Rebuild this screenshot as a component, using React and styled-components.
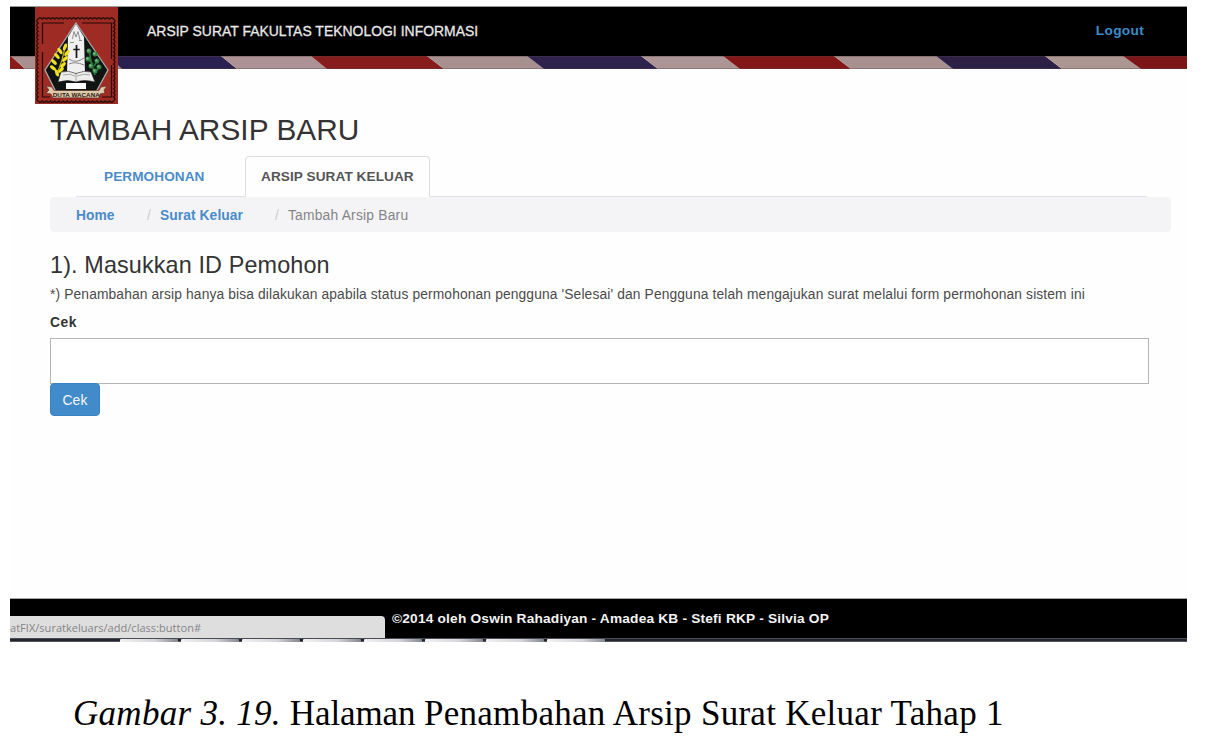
import React from "react";
import styled, { createGlobalStyle } from "styled-components";

const GlobalStyle = createGlobalStyle`
  * { box-sizing: border-box; }
  body { margin: 0; background: #fff; font-family: "Liberation Sans", Arial, sans-serif; color: #333; }
  a { text-decoration: none; }
  h1, h2, p { margin: 0; font-weight: 400; }
`;

const Sheet = styled.div`
  width: 1208px;
  height: 744px;
  padding: 6px 0 0 10px;
  overflow: hidden;
`;

const Screen = styled.div`
  width: 1177px;
  height: 636px;
  display: flex;
  flex-direction: column;
  background: #fefefe;
`;

const Header = styled.header`
  position: relative;
  height: 50px;
  flex: none;
  display: flex;
  justify-content: space-between;
  align-items: center;
  padding: 0 43px 1px 137px;
  background: #000;
  border-top: 1px solid #999;
`;

const Brand = styled.span`
  font-size: 13.9px;
  line-height: 16px;
  letter-spacing: 0.04px;
  color: #e8e8e8;
  -webkit-text-stroke: 0.3px #e8e8e8;
  white-space: nowrap;
`;

const LogoutLink = styled.a`
  font-size: 13.7px;
  font-weight: 700;
  line-height: 16px;
  letter-spacing: 0.3px;
  color: #3f8bcb;
`;

const LogoBadge = styled.svg`
  position: absolute;
  left: 25px;
  top: 0;
  width: 83px;
  height: 97px;
  z-index: 2;
`;

const Ribbon = styled.svg`
  display: block;
  flex: none;
  width: 1177px;
  height: 13px;
`;

const Main = styled.main`
  flex: 1;
  padding: 0 38px 0 40px;
`;

const Title = styled.h1`
  margin-top: 44px;
  font-size: 29.8px;
  line-height: 34px;
  letter-spacing: 0.05px;
  white-space: nowrap;
`;

const Tabs = styled.nav`
  display: flex;
  margin: 9px 2px 0 26px;
  height: 41px;
  border-bottom: 1px solid #e2e2e4;
`;

const Tab = styled.a`
  width: ${(p) => p.$width};
  height: 41px;
  padding-left: ${(p) => p.$inset};
  font-size: 13.6px;
  font-weight: 700;
  line-height: 42px;
  letter-spacing: 0.08px;
  white-space: nowrap;
  color: ${(p) => (p.$active ? "#555" : "#4a8bca")};
  ${(p) =>
    p.$active &&
    "line-height: 40px; background: #fefefe; border: 1px solid #dedee0; border-bottom-color: #fefefe; border-radius: 4px 4px 0 0;"}
`;

const Breadcrumb = styled.ol`
  display: flex;
  align-items: center;
  width: 1121px;
  height: 35px;
  margin: 0;
  padding: 1px 0 0 26px;
  list-style: none;
  background: #f4f4f6;
  border-radius: 4px;
  font-size: 13.8px;
`;

const Crumb = styled.li`
  display: flex;
  width: ${(p) => p.$width};
  white-space: nowrap;
  letter-spacing: ${(p) => p.$spacing};
  color: #848486;
  a { font-weight: 700; color: #4a8bca; }
`;

const Slash = styled.span`
  width: 13px;
  color: #ccc;
`;

const SectionTitle = styled.h2`
  margin-top: 19px;
  font-size: 23.4px;
  line-height: 28px;
  letter-spacing: 0.12px;
  white-space: nowrap;
`;

const Note = styled.p`
  margin-top: 7px;
  font-size: 13.8px;
  line-height: 18px;
  letter-spacing: 0.13px;
  color: #4a4a4a;
  white-space: nowrap;
`;

const Label = styled.label`
  display: block;
  margin-top: 10px;
  font-size: 13.8px;
  font-weight: 700;
  line-height: 18px;
  letter-spacing: 0.5px;
`;

const Field = styled.input`
  display: block;
  width: 1099px;
  height: 46px;
  margin: 6px 0 0;
  padding: 0 12px;
  background: #fff;
  border: 1px solid #b4b4b4;
  outline: none;
`;

const Button = styled.button`
  display: block;
  width: 50px;
  height: 33px;
  margin-top: -1px;
  padding: 0;
  position: relative;
  border: 1px solid #3b82c2;
  border-radius: 4px;
  background: #428bca;
  color: #f4f8fc;
  font: 13.9px "Liberation Sans", Arial, sans-serif;
  letter-spacing: 0.1px;
`;

const Footer = styled.footer`
  position: relative;
  flex: none;
  height: 40px;
  padding: 12px 0 0 382px;
  background: #000;
  border-top: 1px solid #aaa;
  color: #f4f4f4;
  font-size: 13.7px;
  font-weight: 700;
  line-height: 16px;
  letter-spacing: 0.2px;
  white-space: nowrap;
`;

const StatusBubble = styled.div`
  position: absolute;
  left: 0;
  bottom: 0;
  width: 375px;
  height: 22px;
  padding-top: 4px;
  background: #dededf;
  border-radius: 0 4px 0 0;
  color: #858585;
  font: 11px/16px "Open Sans", "Noto Sans", sans-serif;
  letter-spacing: 0.03px;
`;

const Taskbar = styled.div`
  display: flex;
  flex: none;
  gap: 3px;
  height: 4px;
  padding-left: 110px;
  background: #22252e;
  border-top: 1px solid #4a4c55;
  border-bottom: 1px solid #55555e;
`;

const TaskItem = styled.span`
  width: 58px;
  height: 3px;
  border-radius: 1px 1px 0 0;
  background: linear-gradient(90deg, #f2f2f4, #d4d5d9 60%, #85878f);
`;

const Caption = styled.p`
  margin: 52px 0 0 63px;
  font-family: "Liberation Serif", "Times New Roman", serif;
  font-size: 35px;
  line-height: 40px;
  letter-spacing: 0.28px;
  color: #000;
  white-space: nowrap;
`;

const TightWord = styled.span`
  letter-spacing: -0.12px;
`;

const stripes = [
  [-40, -40, 1, 15, "#8c1c1a"],
  [1, 15, 98, 112, "#a8908f"],
  [98, 112, 211, 227, "#2b2150"],
  [211, 227, 301, 317, "#ac9294"],
  [301, 317, 417, 434, "#861c1b"],
  [417, 434, 517, 534, "#a8908f"],
  [517, 534, 631, 648, "#2e234d"],
  [631, 648, 713, 730, "#ad9595"],
  [713, 730, 824, 841, "#831718"],
  [824, 841, 926, 943, "#a8908f"],
  [926, 943, 1035, 1052, "#2c2145"],
  [1035, 1052, 1113, 1131, "#ac9692"],
  [1113, 1131, 1200, 1200, "#7c1517"],
];

const StripeRibbon = () => (
  <Ribbon viewBox="0 0 1177 13">
    {stripes.map(([a, b, c, d, fill]) => (
      <path key={a} fill={fill} d={`M${a} 0H${c}L${d} 13H${b}Z`} />
    ))}
    <path d="M0 .5H1177M0 12.5H1177" stroke="#554449" strokeOpacity=".35" />
  </Ribbon>
);

const scallop = `M38 19${"q2.1 -2.6 4.2 0".repeat(18)}${"q2.6 2.05 0 4.1".repeat(20)}M38 19${"q-2.6 2.05 0 4.1".repeat(20)}${"q2.1 2.6 4.2 0".repeat(18)}`;

const yellowLeaves = [
  [65, 47, 20], [60, 51, -35], [67, 53, 40], [57, 56, -40], [65, 59, 45],
  [54, 62, -45], [63, 65, 45], [53, 68, -50], [61, 70, 45], [57, 73, -20],
];
const greenLeaves = [
  [89, 51], [95, 54], [88, 59], [97, 61], [91, 66], [99, 67], [95, 71],
];

const Logo = () => (
  <LogoBadge viewBox="35 7 83 97">
    <rect x="35" y="7" width="83" height="97" fill="#9e2b24" />
    <path d={scallop} fill="none" stroke="#2c0e0b" strokeWidth="1.4" />
    <path d="M42.5 97V52M42.5 44V23H64M82 23H111.5V59M111.5 65V97H102M42 97H50" fill="none" stroke="#260b09" strokeWidth="1.2" />
    <path d="M76 23L108 70L96 92H56L45 70Z" fill="#101413" stroke="#aaa7a4" strokeWidth="1.3" />
    <path d="M76 24L84 37L85 73H67L68 37Z" fill="#f0f0f1" />
    <path d="M72.5 39L74 31.5L76 37L78 31.5L80 40M79 40.5h3M70 42.5h4" fill="none" stroke="#777" strokeWidth=".8" />
    <path d="M76.5 45V58M73.3 49.5H79.7" stroke="#171717" strokeWidth="1.7" />
    <path d="M69 59Q76 64 84 58M69 64Q75 61 84 65" fill="none" stroke="#858585" />
    <path d="M65 46Q63 61 56 75" fill="none" stroke="#c9b91e" strokeWidth="1.2" />
    {yellowLeaves.map(([x, y, r]) => (
      <ellipse key={`${x}-${y}`} cx={x} cy={y} rx="1.7" ry="3.6" fill="#f0e21d" transform={`rotate(${r} ${x} ${y})`} />
    ))}
    <path d="M89 51Q91 63 95 75M98 60L94 66M88 59L93 64M99 68L95 72" fill="none" stroke="#26753a" strokeWidth="1.6" />
    {greenLeaves.map(([x, y]) => (
      <g key={`${x}-${y}`}>
        <circle cx={x} cy={y} r="2.5" fill="#2d8442" />
        <circle cx={x - 0.6} cy={y - 0.5} r="1.2" fill="#7cb884" />
      </g>
    ))}
    <path d="M61 72Q69 70 76 73.5Q84 70 91 72L95 82Q84 79 76 82Q68 79 58 82Z" fill="#ededec" stroke="#222" strokeWidth=".6" />
    <path d="M76 73V82M63 75Q70 73 75 76M77 76Q84 73 90 75" fill="none" stroke="#888" strokeWidth=".7" />
    <path d="M66 83H86V89H66Z" fill="#fff" />
    <path d="M46 86L52 87L54 90.5H99L101 87L107 86L104 90L105 93L100 94L99 98Q76 97.5 53 98L51 94L46 93L49 90Z" fill="#dfc9ab" stroke="#51251d" strokeWidth=".6" />
    <text x="76.3" y="96.6" textAnchor="middle" textLength="47" lengthAdjust="spacingAndGlyphs" fontFamily="Liberation Sans, Arial, sans-serif" fontWeight="700" fontSize="6" fill="#2b1712">DUTA WACANA</text>
  </LogoBadge>
);

const taskItems = [0, 1, 2, 3, 4, 5, 6, 7];

export default function App() {
  return (
    <Sheet>
      <GlobalStyle />
      <Screen>
        <Header>
          <Logo />
          <Brand>ARSIP SURAT FAKULTAS TEKNOLOGI INFORMASI</Brand>
          <LogoutLink>Logout</LogoutLink>
        </Header>
        <StripeRibbon />
        <Main>
          <Title>TAMBAH ARSIP BARU</Title>
          <Tabs>
            <Tab $width="169px" $inset="28px">PERMOHONAN</Tab>
            <Tab $active $width="185px" $inset="15px">ARSIP SURAT KELUAR</Tab>
          </Tabs>
          <Breadcrumb>
            <Crumb $width="71px" $spacing="0px"><a>Home</a></Crumb>
            <Crumb $width="128px" $spacing="0.08px"><Slash>/</Slash><a>Surat Keluar</a></Crumb>
            <Crumb $spacing="0.22px"><Slash>/</Slash>Tambah Arsip Baru</Crumb>
          </Breadcrumb>
          <SectionTitle>1). Masukkan ID Pemohon</SectionTitle>
          <Note>
            *) Penambahan arsip hanya bisa dilakukan apabila status permohonan pengguna 'Selesai' dan Pengguna telah mengajukan surat melalui form permohonan sistem ini
          </Note>
          <Label htmlFor="cek">Cek</Label>
          <Field id="cek" />
          <Button type="button">Cek</Button>
        </Main>
        <Footer>
          ©2014 oleh Oswin Rahadiyan - Amadea KB - Stefi RKP - Silvia OP
          <StatusBubble>atFIX/suratkeluars/add/class:button#</StatusBubble>
        </Footer>
        <Taskbar>
          {taskItems.map((i) => (
            <TaskItem key={i} />
          ))}
        </Taskbar>
      </Screen>
      <Caption>
        <em>Gambar 3. 19.</em> <TightWord>Halaman </TightWord>Penambahan Arsip Surat Keluar Tahap 1
      </Caption>
    </Sheet>
  );
}
